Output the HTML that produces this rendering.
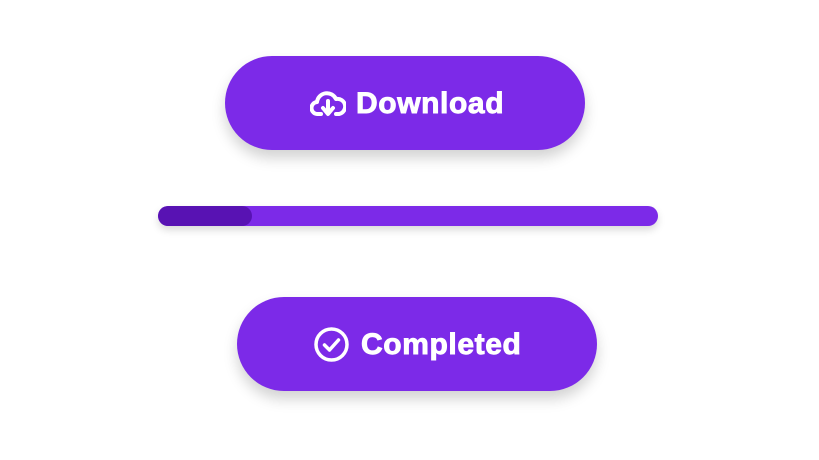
<!DOCTYPE html>
<html><head><style>
body{margin:0;width:819px;height:460px;background:#fff;position:relative;overflow:hidden;font-family:"Liberation Sans",sans-serif}
.btn{position:absolute;width:360px;height:94px;border-radius:47px;background:#7c2ae8;box-shadow:0 8px 14px rgba(0,0,0,0.18);color:#fff;font-weight:bold;font-size:30px;letter-spacing:0.6px;-webkit-text-stroke:0.9px #fff}
.btn span{position:absolute;top:1px;line-height:94px}
.btn svg{position:absolute}
.bar{position:absolute;left:158px;top:206px;width:500px;height:20px;border-radius:10px;background:#7c2ae8;box-shadow:0 4px 8px rgba(0,0,0,0.15);overflow:hidden}
.fill{position:absolute;left:0;top:0;width:94px;height:20px;border-radius:10px;background:#5812b3}
</style></head><body>
<div class="btn" style="left:225px;top:56px">
<svg style="left:85px;top:34px" width="36" height="27" viewBox="0 0 36 27" fill="none" stroke="#fff" stroke-width="4" stroke-linecap="round" stroke-linejoin="round">
<path d="M11 24H8a6 6 0 0 1-1-12 10 10 0 0 1 19-3 7 7 0 0 1 3 15h-3"/>
<path d="M18 11v12M13 18l5 6 5-6"/>
</svg>
<span style="left:131px">Download</span>
</div>
<div class="bar"><div class="fill"></div></div>
<div class="btn" style="left:237px;top:297px">
<svg style="left:77px;top:30px" width="36" height="36" viewBox="0 0 36 36" fill="none" stroke="#fff" stroke-width="3.5" stroke-linecap="round" stroke-linejoin="round">
<circle cx="17.5" cy="17.5" r="15.5"/>
<path d="M10.5 18l5 5 9-10"/>
</svg>
<span style="left:124px">Completed</span>
</div>
</body></html>
